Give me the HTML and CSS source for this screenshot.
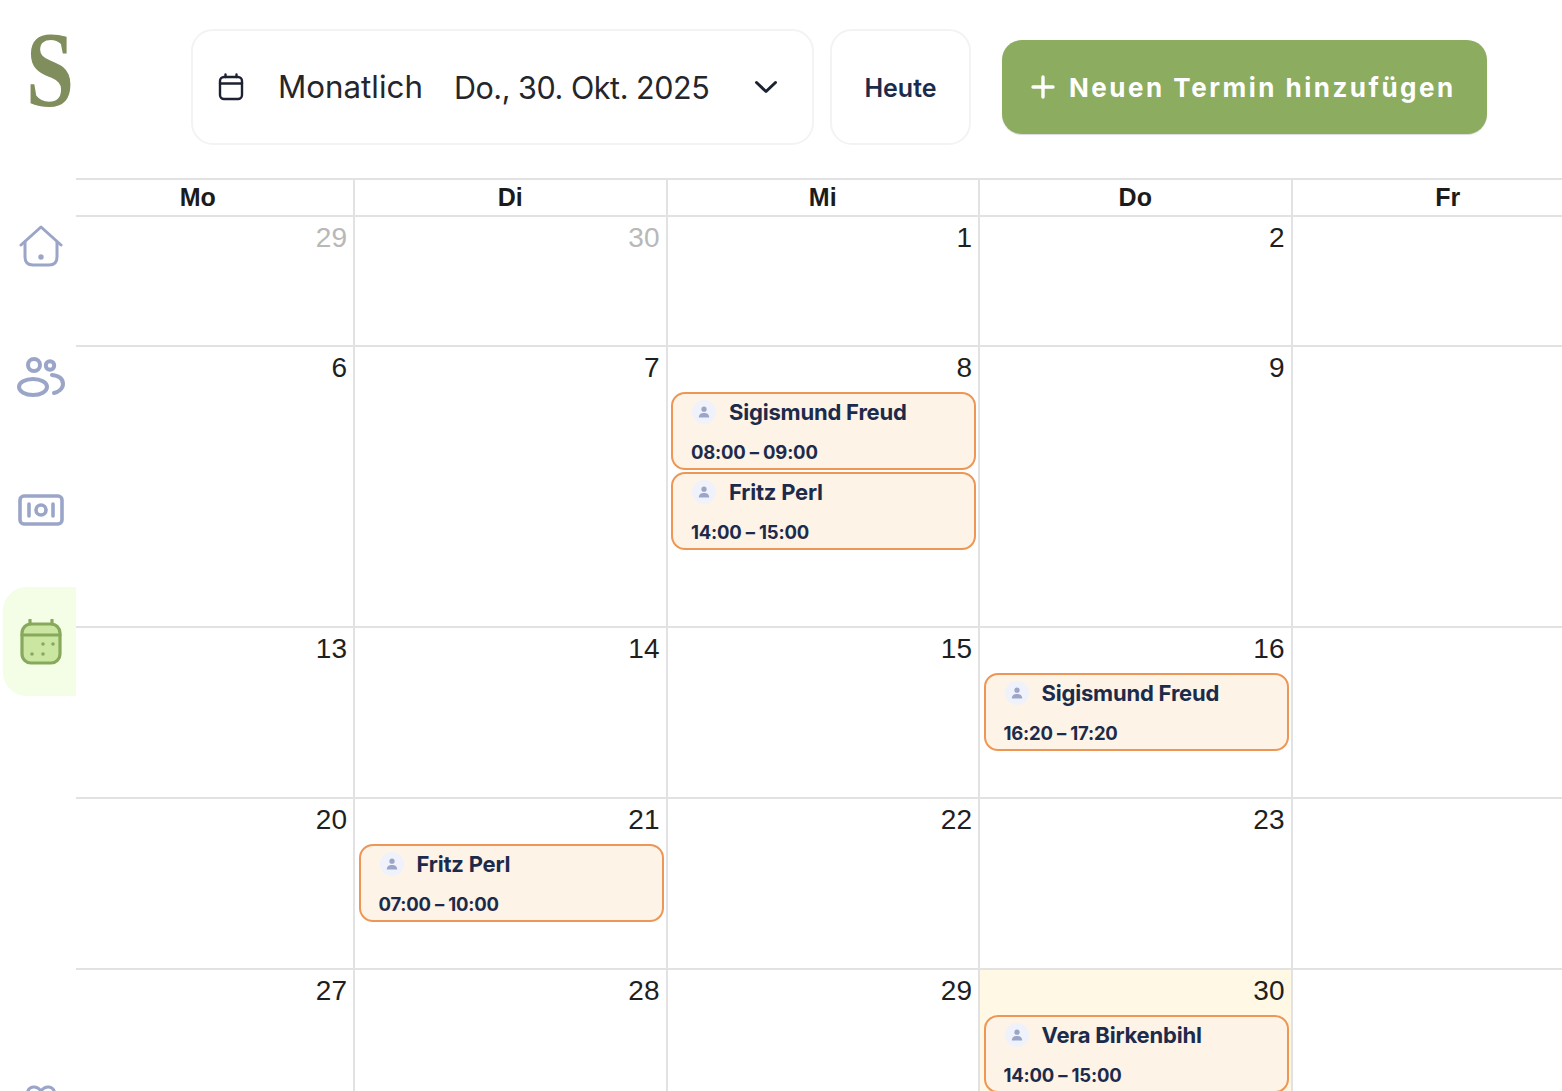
FILE: index.html
```html
<!DOCTYPE html>
<html lang="de">
<head>
  <meta charset="UTF-8" />
  <title>Kalender</title>
  <link rel="stylesheet" href="styles.css">
</head>
<body>
  <div class="app">
    <!-- SEITENLEISTE -->
    <aside class="sidebar">
      <div class="logo"><span class="logo-s">S</span></div>
      <nav class="nav">
        <div class="nav-item">
          <svg class="nav-icon" width="44" height="44" viewBox="0 0 44 44" fill="none" stroke="#9aa5c8" stroke-width="3" stroke-linecap="round" stroke-linejoin="round">
            <path d="M2 21 L22 3 L42 21"/>
            <path d="M6 18 V33 Q6 41 14 41 H30 Q38 41 38 33 V18"/>
            <circle cx="22" cy="33" r="1.2" fill="#9aa5c8"/>
          </svg>
        </div>
        <div class="nav-item">
          <svg class="nav-icon" width="50" height="44" viewBox="0 0 50 44" fill="none" stroke="#9aa5c8" stroke-width="4" stroke-linecap="round">
            <circle cx="18" cy="9" r="6"/>
            <circle cx="34" cy="9.5" r="4.2"/>
            <ellipse cx="17" cy="31" rx="14" ry="8"/>
            <path d="M36 19 C44 20 47 24 47 28 C47 33 42 36 38 37"/>
          </svg>
        </div>
        <div class="nav-item">
          <svg class="nav-icon" width="46" height="32" viewBox="0 0 46 32" fill="none" stroke="#9aa5c8" stroke-width="3.6" stroke-linecap="round">
            <rect x="2" y="2" width="42" height="28" rx="4"/>
            <circle cx="23" cy="16" r="5"/>
            <path d="M11 10 V22 M35 10 V22"/>
          </svg>
        </div>
        <div class="nav-item nav-item-active">
          <svg class="nav-icon" width="42" height="46" viewBox="0 0 42 46" fill="#cbe6a1" stroke="#87a95c" stroke-width="3.2" stroke-linecap="round">
            <rect x="2" y="5" width="38" height="39" rx="9"/>
            <path d="M2 16 H40 M10 1 V5 M32 1 V5"/>
            <g fill="#87a95c" stroke="none">
              <circle cx="23" cy="25" r="1.8"/>
              <circle cx="33" cy="25" r="1.8"/>
              <circle cx="12" cy="35" r="1.8"/>
              <circle cx="23" cy="35" r="1.8"/>
            </g>
          </svg>
        </div>
        <div class="nav-item nav-item-last">
          <svg class="nav-icon" width="30" height="44" viewBox="0 0 30 44" fill="none" stroke="#9aa5c8" stroke-width="3" stroke-linecap="round">
            <path d="M1.5 7 C3 1 11 0 15 6 C19 0 27 1 28.5 7"/>
          </svg>
        </div>
      </nav>
    </aside>

    <main class="main">
      <!-- KOPFZEILE -->
      <header class="topbar">
        <div class="picker">
          <svg width="26" height="28" viewBox="0 0 26 28" fill="none" stroke="#1d2233" stroke-width="2.4" stroke-linecap="round">
            <rect x="2" y="4" width="22" height="22" rx="4"/>
            <path d="M2 10.5 H24 M7.5 1.5 V4 M18.5 1.5 V4"/>
          </svg>
          <span class="picker-mode">Monatlich</span>
          <span class="picker-date">Do., 30. Okt. 2025</span>
          <svg class="picker-chevron" width="24" height="14" viewBox="0 0 24 14" fill="none" stroke="#1d2233" stroke-width="3" stroke-linecap="round" stroke-linejoin="round">
            <path d="M2.5 2.5 L12 11.5 L21.5 2.5"/>
          </svg>
        </div>
        <button class="today">Heute</button>
        <button class="add">
          <svg width="24" height="24" viewBox="0 0 24 24" fill="none" stroke="#fff" stroke-width="3.4" stroke-linecap="round">
            <path d="M12 2 V22 M2 12 H22"/>
          </svg>
          Neuen Termin hinzufügen
        </button>
      </header>

      <!-- KALENDER -->
      <section class="calendar">
        <div class="weekdays">
          <div class="weekday">Mo</div>
          <div class="weekday">Di</div>
          <div class="weekday">Mi</div>
          <div class="weekday">Do</div>
          <div class="weekday">Fr</div>
        </div>

        <div class="week week-1">
          <div class="day"><div class="num num-muted">29</div></div>
          <div class="day"><div class="num num-muted">30</div></div>
          <div class="day"><div class="num">1</div></div>
          <div class="day"><div class="num">2</div></div>
          <div class="day"></div>
        </div>

        <div class="week week-2">
          <div class="day"><div class="num">6</div></div>
          <div class="day"><div class="num">7</div></div>
          <div class="day">
            <div class="num">8</div>
            <div class="event">
              <div class="event-head">
                <span class="avatar"><svg width="12" height="12" viewBox="0 0 12 12" fill="#9aa5c8"><circle cx="6" cy="3.2" r="2.6"/><path d="M0.8 11.5 C0.8 8.4 3 7 6 7 C9 7 11.2 8.4 11.2 11.5 Z"/></svg></span>
                <span class="event-name">Sigismund Freud</span>
              </div>
              <div class="event-time">08:00 – 09:00</div>
            </div>
            <div class="event">
              <div class="event-head">
                <span class="avatar"><svg width="12" height="12" viewBox="0 0 12 12" fill="#9aa5c8"><circle cx="6" cy="3.2" r="2.6"/><path d="M0.8 11.5 C0.8 8.4 3 7 6 7 C9 7 11.2 8.4 11.2 11.5 Z"/></svg></span>
                <span class="event-name">Fritz Perl</span>
              </div>
              <div class="event-time">14:00 – 15:00</div>
            </div>
          </div>
          <div class="day"><div class="num">9</div></div>
          <div class="day"></div>
        </div>

        <div class="week week-3">
          <div class="day"><div class="num">13</div></div>
          <div class="day"><div class="num">14</div></div>
          <div class="day"><div class="num">15</div></div>
          <div class="day">
            <div class="num">16</div>
            <div class="event">
              <div class="event-head">
                <span class="avatar"><svg width="12" height="12" viewBox="0 0 12 12" fill="#9aa5c8"><circle cx="6" cy="3.2" r="2.6"/><path d="M0.8 11.5 C0.8 8.4 3 7 6 7 C9 7 11.2 8.4 11.2 11.5 Z"/></svg></span>
                <span class="event-name">Sigismund Freud</span>
              </div>
              <div class="event-time">16:20 – 17:20</div>
            </div>
          </div>
          <div class="day"></div>
        </div>

        <div class="week week-4">
          <div class="day"><div class="num">20</div></div>
          <div class="day">
            <div class="num">21</div>
            <div class="event">
              <div class="event-head">
                <span class="avatar"><svg width="12" height="12" viewBox="0 0 12 12" fill="#9aa5c8"><circle cx="6" cy="3.2" r="2.6"/><path d="M0.8 11.5 C0.8 8.4 3 7 6 7 C9 7 11.2 8.4 11.2 11.5 Z"/></svg></span>
                <span class="event-name">Fritz Perl</span>
              </div>
              <div class="event-time">07:00 – 10:00</div>
            </div>
          </div>
          <div class="day"><div class="num">22</div></div>
          <div class="day"><div class="num">23</div></div>
          <div class="day"></div>
        </div>

        <div class="week week-5">
          <div class="day"><div class="num">27</div></div>
          <div class="day"><div class="num">28</div></div>
          <div class="day"><div class="num">29</div></div>
          <div class="day day-today">
            <div class="num">30</div>
            <div class="event">
              <div class="event-head">
                <span class="avatar"><svg width="12" height="12" viewBox="0 0 12 12" fill="#9aa5c8"><circle cx="6" cy="3.2" r="2.6"/><path d="M0.8 11.5 C0.8 8.4 3 7 6 7 C9 7 11.2 8.4 11.2 11.5 Z"/></svg></span>
                <span class="event-name">Vera Birkenbihl</span>
              </div>
              <div class="event-time">14:00 – 15:00</div>
            </div>
          </div>
          <div class="day"></div>
        </div>
      </section>
    </main>
  </div>
</body>
</html>
```

FILE: styles.css
```css
/* Farben */
:root {
  --line: #e2e2e4;
  --navy: #1c2b4b;
  --green: #8cac5f;
  --text: #1f1f1f;
}
* { box-sizing: border-box; margin: 0; padding: 0; }
html, body {
  height: 1091px;
  overflow: hidden;
  background: #fff;
}
body {
  color: var(--text);
  font-family: "Liberation Sans", Arial, sans-serif;
}
.app {
  display: flex;
  height: 1091px;
  overflow: hidden;
}

/* SEITENLEISTE */
.sidebar {
  flex: 0 0 76px;
  position: relative;
  z-index: 2;
  background: #fff;
  overflow: hidden;
}
.logo {
  height: 191px;
  padding: 16px 0 0 26px;
}
.logo-s {
  display: block;
  width: 60px;
  color: #808d5d;
  font-family: "Liberation Serif", serif;
  font-size: 108px;
  font-weight: 700;
  line-height: 108px;
  transform: scaleX(0.8);
  transform-origin: left center;
}
.nav {
  display: flex;
  flex-direction: column;
  gap: 23px;
  padding-left: 3px;
}
.nav-item {
  flex: 0 0 109px;
  display: flex;
  align-items: center;
  justify-content: center;
  padding-left: 3px;
}
.nav-icon { display: block; flex: none; }
.nav-item-active {
  background: #f4fde6;
  border-radius: 24px 0 0 24px;
}
.nav-item-last { margin-top: 333px; }

/* HAUPTBEREICH */
.main {
  flex: 1;
  min-width: 0;
}
.topbar {
  display: flex;
  align-items: center;
  height: 178px;
  padding: 0 0 4px 115px;
  gap: 16px;
}
.picker {
  display: flex;
  align-items: center;
  width: 623px;
  height: 116px;
  padding: 0 34px 0 25px;
  border: 2px solid #f3f3f5;
  border-radius: 22px;
}
.picker-mode {
  margin-left: 34px;
  font-family: Inter, sans-serif;
  font-size: 31.3px;
  color: #25262b;
}
.picker-date {
  margin-left: 31px;
  font-family: Inter, sans-serif;
  font-size: 30.5px;
  letter-spacing: -0.45px;
  color: #25262b;
}
.picker-chevron { margin-left: auto; }
.today {
  width: 141px;
  height: 116px;
  padding-top: 2px;
  background: #fff;
  border: 2px solid #f3f3f5;
  border-radius: 22px;
  color: var(--navy);
  font-family: Inter, sans-serif;
  font-size: 25px;
  font-weight: 600;
}
.add {
  display: flex;
  align-items: center;
  gap: 14px;
  width: 485px;
  height: 94px;
  margin-left: 15px;
  padding-left: 29px;
  background: var(--green);
  border: none;
  border-radius: 20px;
  box-shadow: 0 1px 1px rgba(0,0,0,0.15);
  color: #fff;
  font-family: Inter, sans-serif;
  font-size: 26px;
  font-weight: 700;
  letter-spacing: 2.5px;
}

/* KALENDER */
.calendar {
  margin-left: -33.5px;
  width: 1564px;
  border-top: 2px solid var(--line);
}
.weekdays, .week {
  display: grid;
  grid-template-columns: repeat(5, 312.5px);
}
.weekdays {
  height: 37px;
  border-bottom: 2px solid var(--line);
}
.weekday {
  border-right: 2px solid var(--line);
  font-size: 25px;
  font-weight: 700;
  line-height: 35px;
  text-align: center;
  color: #1b1b1b;
}
.week { border-bottom: 2px solid var(--line); }
.week-1 { height: 130px; }
.week-2 { height: 281px; }
.week-3, .week-4 { height: 171px; }
.week-5 { height: 200px; }
.day {
  padding: 7px 2px 0 3.5px;
  border-right: 2px solid var(--line);
}
.day-today { background: #fef8e4; }
.num {
  height: 28px;
  margin-bottom: 10px;
  padding-right: 4px;
  font-size: 28px;
  line-height: 28px;
  text-align: right;
}
.num-muted { color: #b8b8b8; }

/* TERMINE */
.event {
  height: 78px;
  margin-bottom: 2px;
  padding: 6px 18px 0;
  background: #fdf3e6;
  border: 2px solid #ee9655;
  border-radius: 14px;
  color: var(--navy);
  font-family: Inter, sans-serif;
  font-weight: 700;
}
.event-head {
  display: flex;
  align-items: center;
  gap: 13px;
  height: 24px;
}
.avatar {
  display: flex;
  align-items: center;
  justify-content: center;
  width: 24px;
  height: 24px;
  margin-left: 1px;
  background: #eff2fb;
  border-radius: 50%;
}
.event-name {
  font-size: 22px;
  letter-spacing: -0.2px;
}
.event-time {
  margin-top: 16px;
  font-size: 18.5px;
  letter-spacing: -0.2px;
  line-height: 24px;
}
```
